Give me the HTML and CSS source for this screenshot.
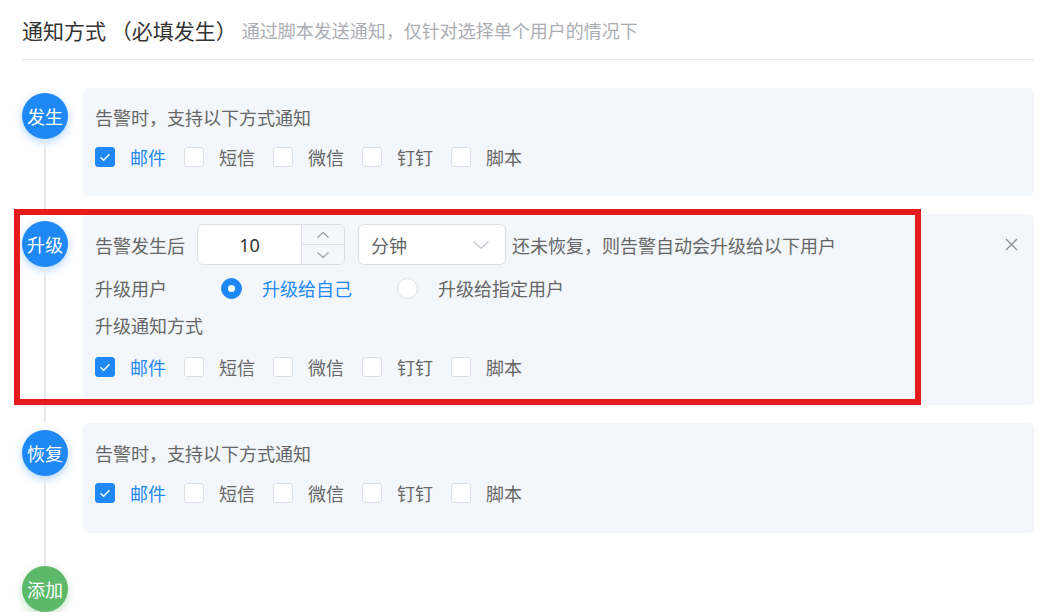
FILE: index.html
```html
<!DOCTYPE html>
<html lang="zh-CN">
<head>
    <meta charset="UTF-8">
    <meta name="viewport" content="width=device-width, initial-scale=1.0">
    <title>通知方式</title>
    <link rel="stylesheet" href="styles.css">
</head>
<body>
    <div class="page">
        <div class="header">
            <span class="title">通知方式 （必填发生）</span>
            <span class="subtitle">通过脚本发送通知，仅针对选择单个用户的情况下</span>
        </div>

        <div class="timeline">
            <!-- 发生 -->
            <div class="tl-item">
                <div class="tl-node">
                    <div class="dot">发生</div>
                    <div class="tail"></div>
                </div>
                <div class="card">
                    <div class="row">告警时，支持以下方式通知</div>
                    <div class="row">
                        <label class="check on"><span class="box"><svg width="20" height="20" viewBox="0 0 20 20"><polyline points="5.5,10.2 8.6,13.2 14.5,7.2" fill="none" stroke="#fff" stroke-width="1.4"/></svg></span><span class="txt">邮件</span></label>
                        <label class="check"><span class="box"></span><span class="txt">短信</span></label>
                        <label class="check"><span class="box"></span><span class="txt">微信</span></label>
                        <label class="check"><span class="box"></span><span class="txt">钉钉</span></label>
                        <label class="check"><span class="box"></span><span class="txt">脚本</span></label>
                    </div>
                </div>
            </div>

            <!-- 升级 -->
            <div class="tl-item">
                <div class="tl-node">
                    <div class="dot dot-mid">升级</div>
                    <div class="tail"></div>
                </div>
                <div class="card card-up">
                    <div class="row r1">
                        <span>告警发生后</span>
                        <div class="num">
                            <div class="num-val">10</div>
                            <div class="num-ctrl">
                                <span><svg width="14" height="8" viewBox="0 0 14 8"><polyline points="1.5,6.5 7,1.5 12.5,6.5" fill="none" stroke="#9a9ca2" stroke-width="1.1"/></svg></span>
                                <span><svg width="14" height="8" viewBox="0 0 14 8"><polyline points="1.5,1.5 7,6.5 12.5,1.5" fill="none" stroke="#9a9ca2" stroke-width="1.1"/></svg></span>
                            </div>
                        </div>
                        <div class="select">
                            <span>分钟</span>
                            <svg width="18" height="10" viewBox="0 0 18 10"><polyline points="1.5,1.5 9,8.5 16.5,1.5" fill="none" stroke="#c0c4cc" stroke-width="1.2"/></svg>
                        </div>
                        <span class="after">还未恢复，则告警自动会升级给以下用户</span>
                        <span class="close"><svg width="13" height="13" viewBox="0 0 13 13"><path d="M1 1 L12 12 M12 1 L1 12" stroke="#8a8c92" stroke-width="1.3"/></svg></span>
                    </div>
                    <div class="row r2">
                        <span class="lbl">升级用户</span>
                        <label class="radio on"><span class="ring"></span><span class="txt">升级给自己</span></label>
                        <label class="radio"><span class="ring"></span><span class="txt">升级给指定用户</span></label>
                    </div>
                    <div class="row r3">升级通知方式</div>
                    <div class="row r4">
                        <label class="check on"><span class="box"><svg width="20" height="20" viewBox="0 0 20 20"><polyline points="5.5,10.2 8.6,13.2 14.5,7.2" fill="none" stroke="#fff" stroke-width="1.4"/></svg></span><span class="txt">邮件</span></label>
                        <label class="check"><span class="box"></span><span class="txt">短信</span></label>
                        <label class="check"><span class="box"></span><span class="txt">微信</span></label>
                        <label class="check"><span class="box"></span><span class="txt">钉钉</span></label>
                        <label class="check"><span class="box"></span><span class="txt">脚本</span></label>
                    </div>
                </div>
            </div>

            <!-- 恢复 -->
            <div class="tl-item">
                <div class="tl-node">
                    <div class="dot dot-mid">恢复</div>
                    <div class="tail"></div>
                </div>
                <div class="card card-last">
                    <div class="row">告警时，支持以下方式通知</div>
                    <div class="row">
                        <label class="check on"><span class="box"><svg width="20" height="20" viewBox="0 0 20 20"><polyline points="5.5,10.2 8.6,13.2 14.5,7.2" fill="none" stroke="#fff" stroke-width="1.4"/></svg></span><span class="txt">邮件</span></label>
                        <label class="check"><span class="box"></span><span class="txt">短信</span></label>
                        <label class="check"><span class="box"></span><span class="txt">微信</span></label>
                        <label class="check"><span class="box"></span><span class="txt">钉钉</span></label>
                        <label class="check"><span class="box"></span><span class="txt">脚本</span></label>
                    </div>
                </div>
            </div>

            <!-- 添加 -->
            <div class="tl-item">
                <div class="tl-node">
                    <div class="tail tail-top"></div>
                    <div class="dot dot-add">添加</div>
                </div>
            </div>
        </div>
    </div>

    <div class="highlight"></div>
</body>
</html>
```

FILE: styles.css
```css
body {
    margin: 0;
    font-family: "Noto Sans CJK SC", "Noto Sans", sans-serif;
    background: #fff;
    color: #666;
    position: relative;
    overflow: hidden;
}

.page {
    padding: 0 20px 0 22px;
}

.header {
    height: 59px;
    display: flex;
    align-items: center;
    border-bottom: 1px solid #e8e8e8;
}

.title {
    font-size: 21px;
    color: #333;
}

.subtitle {
    font-size: 18px;
    color: #abadb3;
    margin-left: 5px;
}

.timeline {
    margin-top: 28px;
}

.tl-item {
    display: flex;
}

.tl-node {
    width: 46px;
    margin-right: 15px;
    flex-shrink: 0;
    display: flex;
    flex-direction: column;
    align-items: center;
}

.dot {
    width: 46px;
    height: 46px;
    margin-top: 5px;
    border-radius: 50%;
    background: #1e88f5;
    color: #fff;
    font-size: 18px;
    display: flex;
    align-items: center;
    justify-content: center;
    flex-shrink: 0;
    box-shadow: 0 3px 8px rgba(30, 136, 245, 0.35);
}

.dot-mid {
    margin-top: 7px;
}

.dot-add {
    margin-top: 0;
    background: #5cb96a;
    box-shadow: 0 3px 8px rgba(92, 185, 106, 0.4);
}

.tail {
    flex: 1;
    width: 2px;
    background: #e6e8eb;
}

.tail-top {
    flex: none;
    height: 15px;
}

.card {
    flex: 1;
    background: #f3f6fb;
    border-radius: 6px;
    padding: 9px 12px 19px;
    margin-bottom: 18px;
}

.card-up {
    padding: 10px 12px 18px;
}

.card-last {
    padding: 10px 12px 20px;
}

.row {
    display: flex;
    align-items: center;
    height: 40px;
    font-size: 18px;
}

.r1 {
    height: 41px;
}

.r2 {
    margin-top: 4px;
    height: 38px;
}

.r3 {
    height: 36px;
}

.r4 {
    margin-top: 4px;
}

/* number input */
.num {
    display: flex;
    width: 148px;
    height: 41px;
    margin-left: 12px;
    box-sizing: border-box;
    border: 1px solid #dcdfe6;
    border-radius: 6px;
    background: #fff;
    overflow: hidden;
}

.num-val {
    flex: 1;
    display: flex;
    align-items: center;
    justify-content: center;
    color: #333;
    font-size: 18px;
    font-family: "Noto Sans", sans-serif;
}

.num-ctrl {
    width: 42px;
    border-left: 1px solid #dcdfe6;
    background: #f5f7fa;
    display: flex;
    flex-direction: column;
}

.num-ctrl span {
    flex: 1;
    display: flex;
    align-items: center;
    justify-content: center;
}

.num-ctrl span + span {
    border-top: 1px solid #dcdfe6;
}

.select {
    width: 148px;
    height: 41px;
    margin-left: 13px;
    box-sizing: border-box;
    border: 1px solid #dcdfe6;
    border-radius: 6px;
    background: #fff;
    padding: 0 15px 0 12px;
    display: flex;
    align-items: center;
    justify-content: space-between;
    color: #606266;
}

.after {
    margin-left: 6px;
}

.close {
    margin-left: auto;
    width: 22px;
    display: flex;
    justify-content: center;
}

/* radio */
.lbl {
    width: 126px;
}

.radio {
    display: flex;
    align-items: center;
    margin-right: 45px;
}

.ring {
    width: 21px;
    height: 21px;
    box-sizing: border-box;
    border-radius: 50%;
    border: 1px solid #dcdfe6;
    background: #fff;
    margin-right: 20px;
    display: flex;
    align-items: center;
    justify-content: center;
}

.radio.on .ring {
    background: #1e88f5;
    border-color: #1e88f5;
}

.radio.on .ring::after {
    content: "";
    width: 7px;
    height: 7px;
    border-radius: 50%;
    background: #fff;
}

.radio.on .txt {
    color: #1e88f5;
}

/* checkbox */
.check {
    display: flex;
    align-items: center;
    margin-right: 18px;
}

.box {
    width: 20px;
    height: 20px;
    box-sizing: border-box;
    border: 1px solid #dcdfe6;
    border-radius: 3px;
    background: #fff;
    margin-right: 15px;
    display: flex;
}

.box svg {
    margin: -1px;
}

.check.on .box {
    background: #1e88f5;
    border-color: #1e88f5;
}

.check.on .txt {
    color: #1e88f5;
}

.highlight {
    position: absolute;
    left: 14px;
    top: 209px;
    width: 907px;
    height: 196px;
    box-sizing: border-box;
    border: 6px solid #e61c1c;
}
```
